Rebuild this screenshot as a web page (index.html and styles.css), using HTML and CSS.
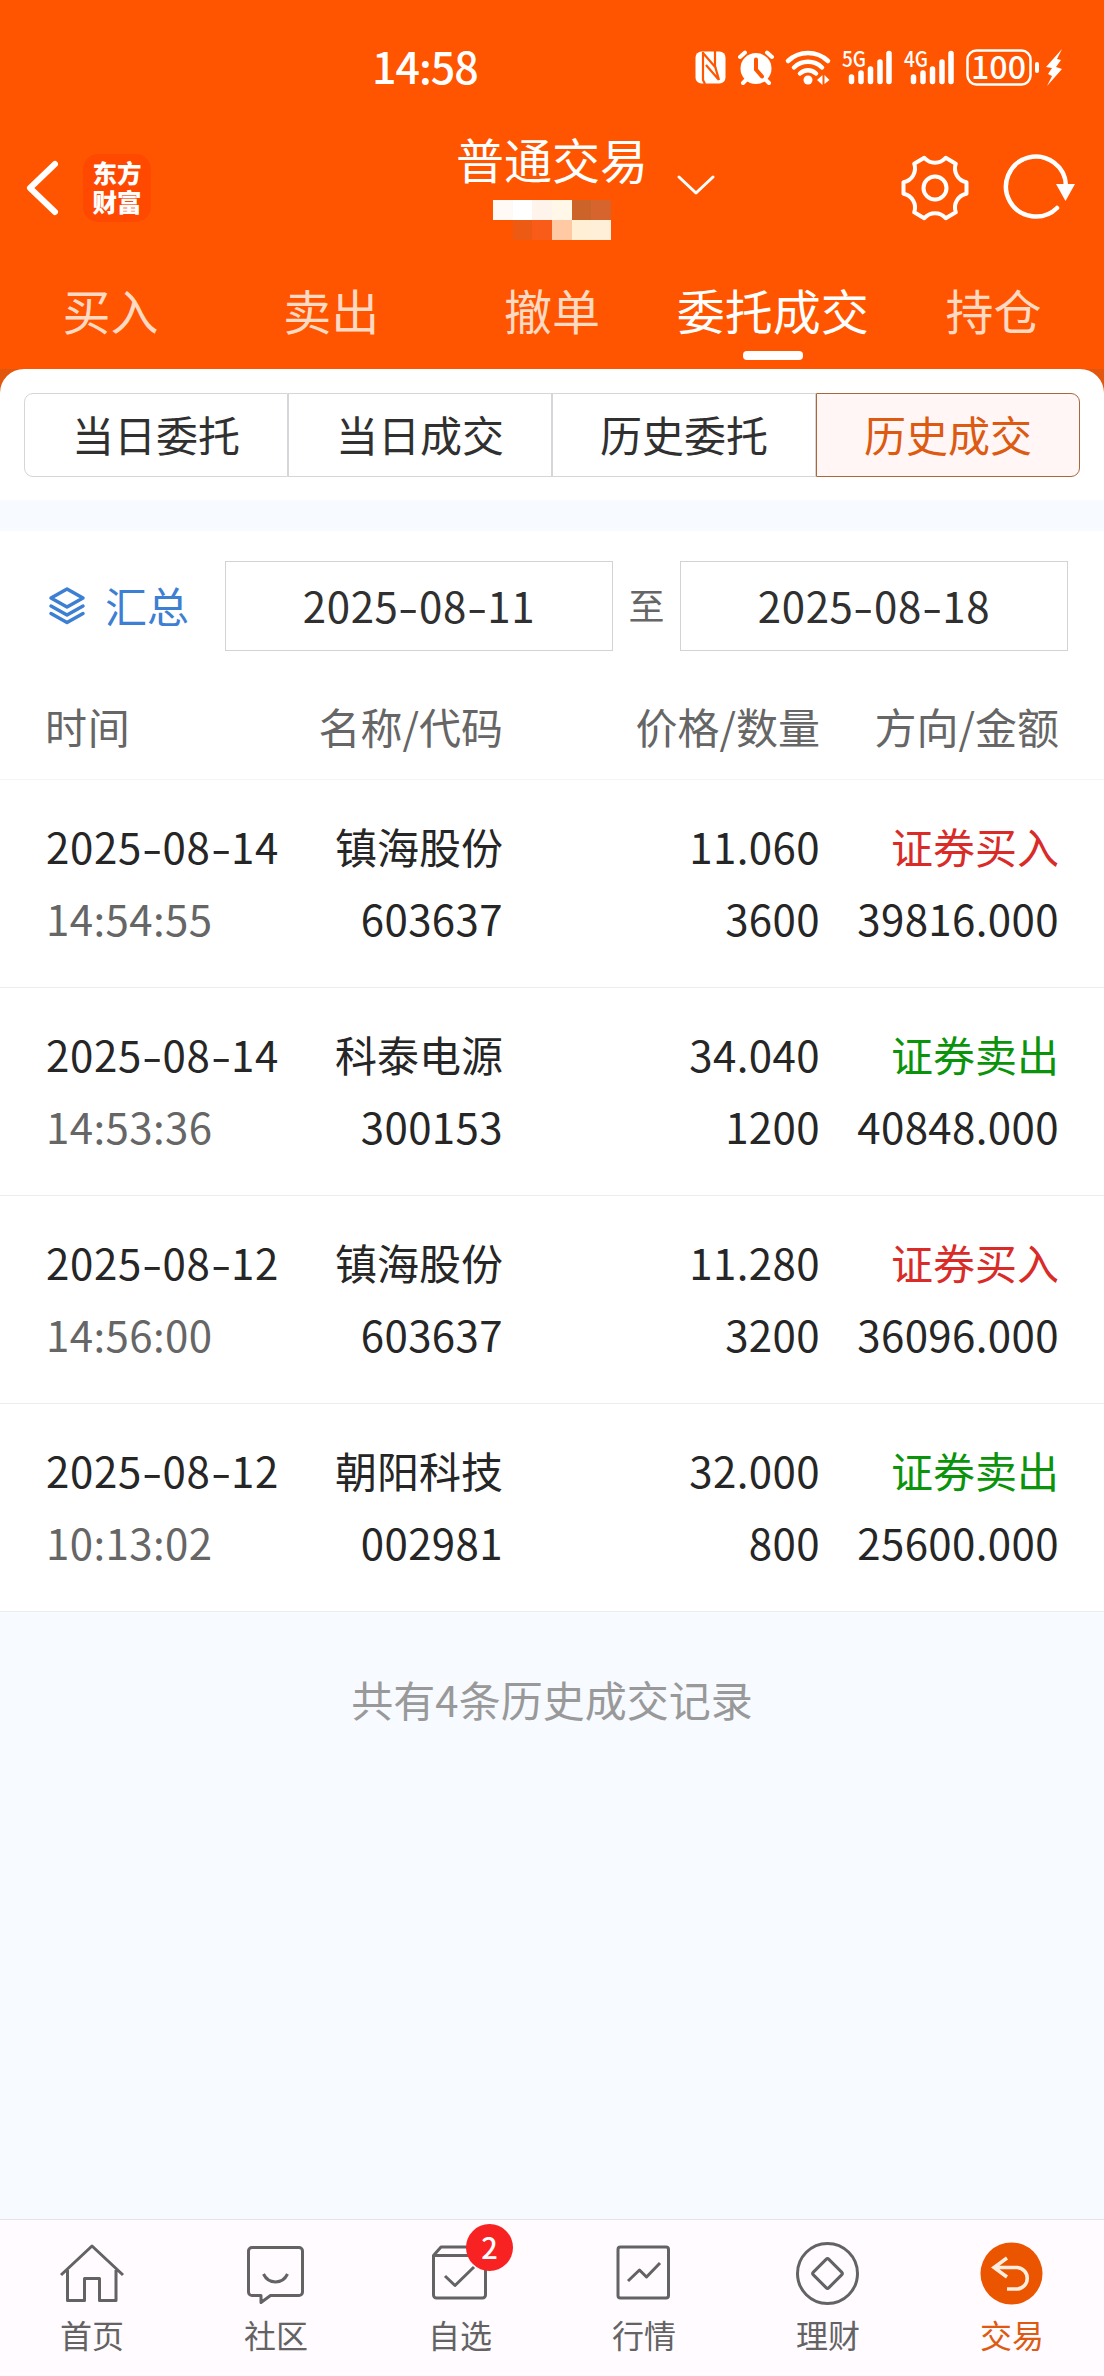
FILE: index.html
```
<!DOCTYPE html>
<html lang="zh-CN">
  <head>
    <meta charset="UTF-8" />
    <meta name="viewport" content="width=device-width, initial-scale=1.0" />
    <title>历史成交</title>
    <link rel="stylesheet" href="styles.css">
  </head>
  <body>
    <div class="app">
      <header class="header">
        <!-- System status bar -->
        <div class="status-bar">
          <span class="clock">14:58</span>
          <svg class="status-icons" width="370" height="40" viewBox="695 48 370 40">
            <!-- NFC -->
            <rect x="695.500" y="51.500" width="30" height="32" rx="6" fill="#fff" />
            <path d="M703 52v28l2 4M703 53l13 15M706 65l13 15M715 51v15l4 14" class="cut" />
            <!-- Alarm -->
            <circle cx="756" cy="68.500" r="15.5" fill="#fff" />
            <path d="M740 57l5-4.500M772 57l-5-4.500M747 79l-4 4M765 79l4 4" class="line" stroke-width="4" />
            <path d="M756 59.500v10l6 7" class="cut hand" />
            <!-- Wifi -->
            <path d="M788 61a29 29 0 0 1 40 0M794 67.500a20 20 0 0 1 28 0M800 73.500a11.500 11.500 0 0 1 16 0" class="line" stroke-width="4.500" />
            <circle cx="808" cy="80" r="4.500" fill="#fff" />
            <path d="M817 80l5.500-5v10zM824.500 75l5 5-5 4z" fill="#fff" />
            <!-- Signals -->
            <text x="842" y="67" font-size="22" textLength="24" lengthAdjust="spacingAndGlyphs">5G</text>
            <path d="M851.500 77v4.500M861 73v8.500M870.500 69v12.500M880 62v19.500M889 53.500v28" class="line" stroke-width="5.500" />
            <text x="904" y="67" font-size="22" textLength="24" lengthAdjust="spacingAndGlyphs">4G</text>
            <path d="M913.500 77v4.500M923 73v8.500M932.500 69v12.500M942 62v19.500M951 53.500v28" class="line" stroke-width="5.500" />
            <!-- Battery -->
            <rect x="967.500" y="50.500" width="63" height="34" rx="9" class="line" stroke-width="2.500" />
            <text x="971" y="79" font-size="31.500" textLength="55" lengthAdjust="spacingAndGlyphs">100</text>
            <path d="M1037 64v7" class="line" stroke-width="4" />
            <path d="M1062 49L1046 67l6 1-4 6 4 2-5 10 15-17-6-2 5-7-4-1z" fill="#fff" />
          </svg>
        </div>

        <!-- Title row -->
        <div class="title-bar">
          <div class="title-left">
            <svg width="34" height="58" viewBox="0 0 34 58">
              <path d="M30 5L5 29 30 53" class="line" stroke-width="6" />
            </svg>
            <div class="logo"><span>东方</span><span>财富</span></div>
          </div>
          <div class="account">
            <span class="account-name">普通交易</span>
            <div class="mosaic">
              <i class="m1"></i><i class="m2"></i><i class="m3"></i><i class="m4"></i><i class="m5"></i><i class="m6"></i>
              <i></i><i class="m7"></i><i class="m8"></i><i class="m9"></i><i class="m10"></i><i class="m11"></i>
            </div>
          </div>
          <svg class="arrow-down" width="38" height="20" viewBox="0 0 38 20">
            <path d="M2 2l17 16L36 2" class="line" stroke-width="3" />
          </svg>
          <div class="title-right">
            <svg width="70" height="70" viewBox="-35 -35 70 70">
              <path d="M31.500-5.800V5.800A14 14 0 0 0 20.800 24.300L10.700 30.200A14 14 0 0 0-10.700 30.200L-20.800 24.300A14 14 0 0 0-31.500 5.800V-5.800A14 14 0 0 0-20.800-24.300L-10.700-30.200A14 14 0 0 0 10.700-30.200L20.800-24.300A14 14 0 0 0 31.500-5.800z" class="line" stroke-width="4" />
              <circle r="11.500" class="line" stroke-width="4" />
            </svg>
            <svg width="76" height="70" viewBox="-35 -35 76 70">
              <path d="M21 20A30 30 0 1 1 30-2" class="line" stroke-width="4.500" />
              <path d="M20-4H39L29.500 13z" fill="#fff" />
            </svg>
          </div>
        </div>

        <nav class="tabs">
          <a>买入</a>
          <a>卖出</a>
          <a>撤单</a>
          <a class="active">委托成交</a>
          <a>持仓</a>
        </nav>
      </header>

      <main>
        <div class="segment-wrap">
          <div class="segment-panel">
            <div class="segment">
              <span>当日委托</span>
              <span>当日成交</span>
              <span>历史委托</span>
              <span class="active">历史成交</span>
            </div>
          </div>
        </div>

        <!-- Date filter -->
        <div class="filter">
          <div class="summary">
            <svg width="38" height="40" viewBox="0 0 38 40">
              <path d="M19 3L35 12 19 21 3 12zM3 20l16 9 16-9M3 27.500l16 9 16-9" />
            </svg>
            <span>汇总</span>
          </div>
          <div class="date-box">2025<b>-</b>08<b>-</b>11</div>
          <span class="to">至</span>
          <div class="date-box">2025<b>-</b>08<b>-</b>18</div>
        </div>

        <!-- Deal records -->
        <div class="row head">
          <span>时间</span>
          <span>名称/代码</span>
          <span>价格/数量</span>
          <span>方向/金额</span>
        </div>
        <div class="row">
          <span>2025<b>-</b>08<b>-</b>14</span>
          <span class="name">镇海股份</span>
          <span>11.060</span>
          <span class="buy">证券买入</span>
          <span class="time">14:54:55</span>
          <span>603637</span>
          <span>3600</span>
          <span>39816.000</span>
        </div>
        <div class="row">
          <span>2025<b>-</b>08<b>-</b>14</span>
          <span class="name">科泰电源</span>
          <span>34.040</span>
          <span class="sell">证券卖出</span>
          <span class="time">14:53:36</span>
          <span>300153</span>
          <span>1200</span>
          <span>40848.000</span>
        </div>
        <div class="row">
          <span>2025<b>-</b>08<b>-</b>12</span>
          <span class="name">镇海股份</span>
          <span>11.280</span>
          <span class="buy">证券买入</span>
          <span class="time">14:56:00</span>
          <span>603637</span>
          <span>3200</span>
          <span>36096.000</span>
        </div>
        <div class="row">
          <span>2025<b>-</b>08<b>-</b>12</span>
          <span class="name">朝阳科技</span>
          <span>32.000</span>
          <span class="sell">证券卖出</span>
          <span class="time">10:13:02</span>
          <span>002981</span>
          <span>800</span>
          <span>25600.000</span>
        </div>
        <p class="total">共有4条历史成交记录</p>
      </main>

      <!-- Bottom navigation -->
      <footer class="bottom-nav">
        <a>
          <svg width="64" height="64" viewBox="0 0 64 64">
            <path d="M1 33L32 4 63 33M7.500 28V58.500H24.500V36.500H39.500V58.500H56V28" />
          </svg>
          首页
        </a>
        <a>
          <svg width="64" height="64" viewBox="0 0 64 64">
            <path d="M8 5.500H55a3.500 3.500 0 0 1 3.500 3.500V50a3.500 3.500 0 0 1-3.500 3.500H26.500L17 60.500V53.500H8A3.500 3.500 0 0 1 4.500 50V9A3.500 3.500 0 0 1 8 5.500z" />
            <path d="M19.500 32c5 10.500 19 10.500 24 0" />
          </svg>
          社区
        </a>
        <a>
          <svg width="64" height="64" viewBox="0 0 64 64">
            <path d="M5.500 13.500L13 5H50L57.500 13.500V53a3 3 0 0 1-3 3H8.500a3 3 0 0 1-3-3zH57.500M17 34L27 43.500 46 25" />
          </svg>
          自选
          <span class="badge">2</span>
        </a>
        <a>
          <svg width="64" height="64" viewBox="0 0 64 64">
            <rect x="6" y="5" width="50.500" height="51" rx="2.500" />
            <path d="M16 39L27.500 28 34.500 35 48 21" />
          </svg>
          行情
        </a>
        <a>
          <svg width="64" height="64" viewBox="0 0 64 64">
            <circle cx="31.500" cy="31.500" r="30" />
            <rect x="20.500" y="20.500" width="22" height="22" rx="2" transform="rotate(45 31.500 31.500)" />
          </svg>
          理财
        </a>
        <a class="active">
          <svg width="64" height="64" viewBox="0 0 64 64">
            <circle cx="31.500" cy="31.500" r="31" />
            <path d="M27 16L14 25.500 27 35M14 25.500H37.500a10.800 10.800 0 0 1 0 21.500H27" />
          </svg>
          交易
        </a>
      </footer>
    </div>
  </body>
</html>
```
FILE: styles.css
```
* {
  box-sizing: border-box;
}

body {
  margin: 0;
  font-family: "Noto Sans CJK SC", sans-serif;
  font-size: 42px;
  color: #262626;
  background: #f7faff;
}

.app {
  display: flex;
  flex-direction: column;
  width: 1104px;
  height: 2376px;
}

svg {
  display: block;
  flex: none;
  overflow: visible;
}

/* White outline icons of the header */
.line {
  fill: none;
  stroke: #fff;
  stroke-linecap: round;
  stroke-linejoin: round;
}

/* ==== Header ==== */
.header {
  height: 369px;
  background: #ff5500;
  color: #fff;
}

.status-bar {
  display: flex;
  align-items: center;
  justify-content: space-between;
  height: 120px;
  padding: 16px 39px 0 372px;
}

.clock {
  margin-top: -6px;
  font-size: 43px;
  font-weight: 500;
  line-height: 60px;
  letter-spacing: -1px;
}

.status-icons text {
  fill: #fff;
  font-weight: 500;
}

.status-icons .cut {
  fill: none;
  stroke: #ff5500;
  stroke-width: 2.2;
}

.status-icons .hand {
  stroke-width: 4;
  stroke-linecap: round;
}

.title-bar {
  display: grid;
  grid-template-columns: 433px 238px 1fr auto;
  height: 135px;
}

.title-left {
  display: flex;
  align-items: center;
  gap: 24px;
  padding-left: 25px;
}

.logo {
  display: flex;
  flex-direction: column;
  width: 68px;
  height: 68px;
  padding-top: 4px;
  border-radius: 15px;
  background: #ff4800;
  font-size: 24.5px;
  font-weight: 900;
  line-height: 29px;
  text-align: center;
}

.account {
  display: flex;
  flex-direction: column;
  align-items: center;
  padding-top: 2px;
}

.account-name {
  font-size: 48px;
  line-height: 72px;
}

/* Masked account number */
.mosaic {
  display: grid;
  grid-template-columns: repeat(6, 19.7px);
  grid-auto-rows: 20px;
  margin-top: 6px;
}

.m1 { background: #fffaf5; }
.m2 { background: #ffffff; }
.m3 { background: #fff4ec; }
.m4 { background: #fff8e8; }
.m5 { background: #cc6328; }
.m6 { background: #d5652c; }
.m7 { background: #ec5a14; }
.m8 { background: #f85c18; }
.m9 { background: #ffc9a4; }
.m10 { background: #fff0d5; }
.m11 { background: #ffefd9; }

.arrow-down {
  margin: 55px 0 0 6px;
}

.title-right {
  display: flex;
  align-items: center;
  gap: 31px;
  padding-right: 27px;
}

.tabs {
  display: grid;
  grid-template-columns: repeat(5, 1fr);
  height: 114px;
  font-size: 48px;
  line-height: 72px;
  color: #ffd9c2;
}

.tabs a {
  display: flex;
  flex-direction: column;
  align-items: center;
  padding-top: 18px;
}

.tabs .active {
  color: #fff;
}

.tabs .active::after {
  content: "";
  width: 60px;
  height: 9px;
  margin-top: 6px;
  border-radius: 4px;
  background: #fff;
}

/* ==== Content ==== */
main {
  flex: 1;
}

.segment-wrap {
  background: linear-gradient(#e2560e 24px, #fff 24px);
}

.segment-panel {
  height: 131px;
  padding: 24px 24px 0;
  border-radius: 24px 24px 0 0;
  background: #fff;
}

.segment {
  display: grid;
  grid-template-columns: repeat(4, 1fr);
  height: 84px;
  line-height: 79px;
  text-align: center;
  color: #303030;
}

.segment span {
  border: 1px solid #d5d5da;
}

.segment span:first-child {
  border-radius: 9px 0 0 9px;
}

.segment .active {
  border-color: #a8683c;
  border-radius: 0 9px 9px 0;
  background: #fff6f5;
  color: #dc5a12;
}

.filter {
  display: flex;
  align-items: center;
  height: 149px;
  margin-top: 31px;
  padding: 0 36px 0 48px;
  background: #fff;
}

.summary {
  display: flex;
  align-items: center;
  gap: 19px;
  width: 177px;
  color: #3d7fd2;
}

.summary span {
  margin-top: -3px;
}

.summary svg {
  fill: none;
  stroke: #3d7fd2;
  stroke-width: 3.5;
  stroke-linejoin: round;
  stroke-linecap: round;
}

.date-box {
  width: 388px;
  height: 90px;
  border: 1px solid #d3d3d6;
  line-height: 85px;
  letter-spacing: 0.6px;
  text-align: center;
  color: #303030;
}

.to {
  flex: 1;
  margin-top: -3px;
  font-size: 36px;
  text-align: center;
  color: #666;
}

/* Wide date dash */
b {
  display: inline-block;
  width: 20.5px;
  text-align: center;
  font-weight: 400;
  letter-spacing: 0;
  transform: scaleX(1.4);
}

.row {
  display: grid;
  grid-template-columns: 274px 183px 317px 239px;
  height: 208px;
  padding: 30px 45px 33px 46px;
  border-bottom: 1px solid #ececee;
  background: #fff;
  line-height: 72px;
  letter-spacing: 0.4px;
  white-space: nowrap;
}

.row span:not(:nth-child(4n + 1)) {
  justify-self: end;
}

.row span:first-child {
  letter-spacing: 0.7px;
}

.head {
  height: 100px;
  padding-top: 10px;
  padding-bottom: 0;
  border-color: #f2f5fa;
  letter-spacing: 0;
  color: #666;
}

.head span:first-child {
  margin-left: -1px;
}

.row .time {
  color: #666;
}

.name {
  letter-spacing: 0;
}

.buy {
  letter-spacing: 0;
  color: #d92b28;
}

.sell {
  letter-spacing: 0;
  color: #0b930b;
}

.total {
  margin: 56px 0 0;
  line-height: 62px;
  text-align: center;
  color: #999;
}

/* ==== Bottom navigation ==== */
.bottom-nav {
  display: grid;
  grid-template-columns: repeat(6, 1fr);
  height: 157px;
  border-top: 1px solid #e2e4e8;
  background: #fffbff;
  font-size: 32px;
  line-height: 48px;
  color: #636363;
}

.bottom-nav a {
  position: relative;
  display: flex;
  flex-direction: column;
  align-items: center;
  gap: 4px;
  padding-top: 22px;
}

.bottom-nav svg {
  fill: none;
  stroke: #636363;
  stroke-width: 3;
  stroke-linejoin: round;
}

.bottom-nav .active {
  color: #dc5a12;
}

.bottom-nav .active circle {
  fill: #eb5500;
  stroke: none;
}

.bottom-nav .active path {
  stroke: #ffeedd;
  stroke-width: 3.5;
  stroke-linejoin: miter;
}

.badge {
  position: absolute;
  top: 4px;
  left: 98px;
  width: 47px;
  height: 47px;
  border-radius: 50%;
  background: #f82222;
  color: #fff;
  font-size: 29px;
  font-weight: 500;
  line-height: 45px;
  text-align: center;
}
```
